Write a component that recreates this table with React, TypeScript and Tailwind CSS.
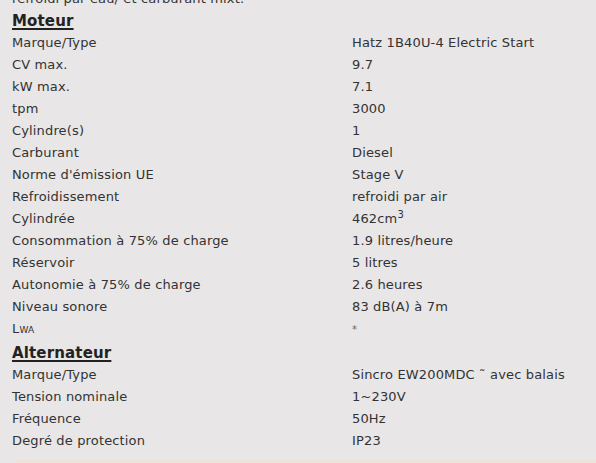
import React from "react";

type Row = { label: React.ReactNode; value: React.ReactNode };

const moteur: Row[] = [
  { label: "Marque/Type", value: "Hatz 1B40U-4 Electric Start" },
  { label: "CV max.", value: "9.7" },
  { label: "kW max.", value: "7.1" },
  { label: "tpm", value: "3000" },
  { label: "Cylindre(s)", value: "1" },
  { label: "Carburant", value: "Diesel" },
  { label: "Norme d'émission UE", value: "Stage V" },
  { label: "Refroidissement", value: "refroidi par air" },
  {
    label: "Cylindrée",
    value: (
      <>
        462cm<span className="text-[10px] relative -top-[5px]">3</span>
      </>
    ),
  },
  { label: "Consommation à 75% de charge", value: "1.9 litres/heure" },
  { label: "Réservoir", value: "5 litres" },
  { label: "Autonomie à 75% de charge", value: "2.6 heures" },
  { label: "Niveau sonore", value: "83 dB(A) à 7m" },
  {
    label: (
      <>
        L<span className="text-[9px]">WA</span>
      </>
    ),
    value: <span className="text-[10px] text-[#666]">*</span>,
  },
];

const alternateur: Row[] = [
  { label: "Marque/Type", value: "Sincro EW200MDC ˜ avec balais" },
  { label: "Tension nominale", value: "1~230V" },
  { label: "Fréquence", value: "50Hz" },
  { label: "Degré de protection", value: "IP23" },
];

function Rows({ rows }: { rows: Row[] }) {
  return (
    <>
      {rows.map((r, i) => (
        <div key={i} className="flex h-[22px] items-center">
          <div className="w-[340px] shrink-0">{r.label}</div>
          <div>{r.value}</div>
        </div>
      ))}
    </>
  );
}

function Header({ children, extra = "" }: { children: React.ReactNode; extra?: string }) {
  return (
    <div
      className={
        "h-[22px] flex items-center text-[15px] font-bold underline underline-offset-[2px] decoration-[1.5px] text-[#222] " +
        extra
      }
    >
      {children}
    </div>
  );
}

export default function App() {
  return (
    <div
      className="w-[596px] h-[463px] overflow-hidden bg-[#e8e6e7] text-[#333] text-[13px] leading-[22px] tracking-[0.15px]"
      style={{ fontFamily: "Verdana, 'DejaVu Sans', sans-serif" }}
    >
      <div className="pl-[12px]">
        <div className="h-[10px] overflow-hidden relative">
          <div className="absolute -top-[12px] left-0 whitespace-nowrap leading-[22px]">
            refroidi par eau/ et carburant mixt.
          </div>
        </div>
        <Header>Moteur</Header>
        <Rows rows={moteur} />
        <Header extra="mt-[2px]">Alternateur</Header>
        <Rows rows={alternateur} />
      </div>
      <div className="ml-[16px] mt-[8px] h-[20px] border-t-2 border-l border-[#efe3cf] bg-[#ebe6e2]" />
    </div>
  );
}
